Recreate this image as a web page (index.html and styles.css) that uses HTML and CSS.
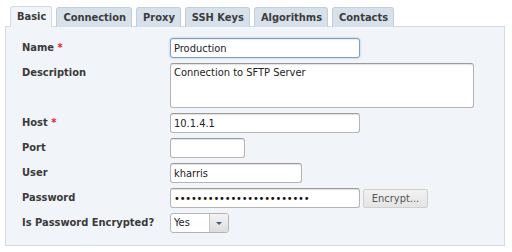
FILE: index.html
```html
<!DOCTYPE html>
<html lang="en">
<head>
    <meta charset="UTF-8">
    <title>Site Properties</title>
    <link rel="stylesheet" href="styles.css">
</head>
<body>
    <div class="tabs">
        <div class="tab active">Basic</div>
        <div class="tab">Connection</div>
        <div class="tab">Proxy</div>
        <div class="tab">SSH Keys</div>
        <div class="tab">Algorithms</div>
        <div class="tab">Contacts</div>
    </div>

    <div class="panel">
        <form class="site-form">
            <label class="field-label">Name <span class="req">*</span></label>
            <div class="field"><input type="text" class="text-input wide focused" value="Production"></div>

            <label class="field-label">Description</label>
            <div class="field"><textarea class="text-area">Connection to SFTP Server</textarea></div>

            <label class="field-label">Host <span class="req">*</span></label>
            <div class="field"><input type="text" class="text-input wide" value="10.1.4.1"></div>

            <label class="field-label">Port</label>
            <div class="field"><input type="text" class="text-input port" value=""></div>

            <label class="field-label">User</label>
            <div class="field"><input type="text" class="text-input user" value="kharris"></div>

            <label class="field-label">Password</label>
            <div class="field">
                <input type="password" class="text-input wide pass" value="abcdefghijklmnopqrstuvwx">
                <button type="button" class="btn">Encrypt...</button>
            </div>

            <label class="field-label">Is Password Encrypted?</label>
            <div class="field">
                <div class="select">
                    <span class="select-value">Yes</span>
                    <span class="select-arrow"><span class="caret"></span></span>
                </div>
            </div>
        </form>
    </div>
</body>
</html>
```

FILE: styles.css
```css
* {
    margin: 0;
    padding: 0;
    box-sizing: border-box;
}

body {
    font-family: "DejaVu Sans Condensed", "DejaVu Sans", Tahoma, sans-serif;
    font-size: 11px;
    color: #333;
    background: white;
    padding: 6px 7px 0 5px;
}

.tabs {
    display: flex;
    gap: 4px;
    padding-left: 5px;
    height: 20px;
}

.tab {
    height: 20px;
    padding: 0 5px 0 6px;
    line-height: 19px;
    font-weight: bold;
    color: #3c3c3c;
    background: #d7e1ec;
    border: 1px solid #c4ced9;
    border-bottom: none;
    border-radius: 3px 3px 0 0;
    margin-top: 1px;
}

.tab.active {
    background: #f1f4f9;
    border-color: #d3dae3;
    margin-top: 0;
    height: 21px;
    position: relative;
    z-index: 1;
}

.panel {
    background: #f1f4f9;
    border: 1px solid #d3dae3;
    height: 220px;
    padding: 11px 16px 0 16px;
}

.site-form {
    display: grid;
    grid-template-columns: 148px auto;
    row-gap: 5px;
}

.field-label {
    font-weight: bold;
    line-height: 20px;
    color: #3a3a3a;
}

.req {
    color: #e8202a;
}

.field {
    display: flex;
    align-items: center;
    gap: 3px;
}

.text-input,
.text-area {
    font: inherit;
    color: #222;
    background: white;
    border: 1px solid #b4b4b4;
    border-top-color: #9a9a9a;
    border-radius: 3px;
    box-shadow: inset 0 1px 1px rgba(0,0,0,0.12);
    height: 20px;
    padding: 0 3px;
    outline: none;
}

.text-input.focused {
    border-color: #7f9fbf;
    box-shadow: 0 0 2px rgba(90,130,180,0.5), inset 0 1px 1px rgba(0,0,0,0.08);
}

.pass {
    color: #111;
    letter-spacing: -0.2px;
}

.wide {
    width: 190px;
}

.port {
    width: 75px;
}

.user {
    width: 132px;
}

.text-area {
    width: 304px;
    height: 45px;
    padding: 2px 3px;
    resize: none;
    overflow: hidden;
}

.btn {
    font: inherit;
    color: #555;
    height: 19px;
    width: 65px;
    background: linear-gradient(#f2f2f2, #e4e4e4);
    border: 1px solid #cfcfcf;
    border-radius: 2px;
}

.select {
    display: flex;
    width: 59px;
    height: 20px;
    background: white;
    border: 1px solid #b4b4b4;
    border-radius: 3px;
    overflow: hidden;
}

.select-value {
    flex: 1;
    line-height: 18px;
    padding-left: 3px;
    color: #222;
}

.select-arrow {
    width: 19px;
    display: flex;
    align-items: center;
    justify-content: center;
    background: linear-gradient(#f4f4f4, #dcdcdc);
    border-left: 1px solid #c4c4c4;
}

.caret {
    width: 0;
    height: 0;
    border-left: 3px solid transparent;
    border-right: 3px solid transparent;
    border-top: 3px solid #3f5f80;
}
```
